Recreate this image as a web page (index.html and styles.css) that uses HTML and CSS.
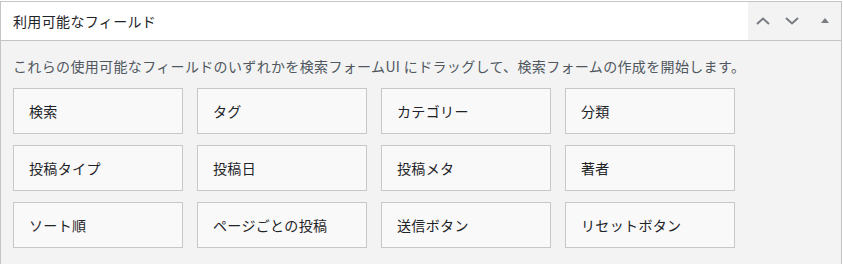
FILE: index.html
```html
<!DOCTYPE html>
<html>
<head>
  <title>利用可能なフィールド</title>
  <link rel="stylesheet" href="styles.css">
</head>
<body>
  <div class="postbox">
    <div class="postbox-header">
      <h2 class="hndle">利用可能なフィールド</h2>
      <div class="handle-actions">
        <button class="handle-btn" title="上へ移動">
          <svg width="14" height="8" viewBox="0 0 14 8"><path d="M1 7 L7 1.5 L13 7" fill="none" stroke="#787c82" stroke-width="2"/></svg>
        </button>
        <button class="handle-btn" title="下へ移動">
          <svg width="14" height="8" viewBox="0 0 14 8"><path d="M1 1 L7 6.5 L13 1" fill="none" stroke="#787c82" stroke-width="2"/></svg>
        </button>
        <button class="handle-btn toggle" title="パネルを切り替え">
          <svg width="8" height="5" viewBox="0 0 8 5"><path d="M0 5 L4 0 L8 5 Z" fill="#787c82"/></svg>
        </button>
      </div>
    </div>

    <div class="inside">
      <p class="description">これらの使用可能なフィールドのいずれかを検索フォームUI にドラッグして、検索フォームの作成を開始します。</p>

      <div class="field-list">
        <div class="field">検索</div>
        <div class="field">タグ</div>
        <div class="field">カテゴリー</div>
        <div class="field">分類</div>
        <div class="field">投稿タイプ</div>
        <div class="field">投稿日</div>
        <div class="field">投稿メタ</div>
        <div class="field">著者</div>
        <div class="field">ソート順</div>
        <div class="field">ページごとの投稿</div>
        <div class="field">送信ボタン</div>
        <div class="field">リセットボタン</div>
      </div>
    </div>
  </div>
</body>
</html>
```

FILE: styles.css
```css
/* Main Styles */
body {
  font-family: "Noto Sans CJK JP", "Noto Sans", sans-serif;
  margin: 0;
  padding: 1px 0 0;
  background-color: #fff;
  color: #1d2327;
  font-size: 14px;
  letter-spacing: 0.35px;
}

.postbox {
  width: 840px;
  height: 300px;
  border: 1px solid #c3c4c7;
  border-bottom: none;
  background-color: #f3f3f3;
}

/* Header Styles */
.postbox-header {
  display: flex;
  justify-content: space-between;
  align-items: center;
  height: 38px;
  background-color: #fff;
  border-bottom: 1px solid #c3c4c7;
}

.hndle {
  margin: 0;
  padding: 0 12px;
  font-size: 14px;
  font-weight: normal;
  line-height: 38px;
}

.handle-actions {
  display: flex;
  width: 93px;
  height: 100%;
  background-color: #f3f3f3;
}

.handle-btn {
  width: 29px;
  height: 38px;
  border: none;
  background: none;
  padding: 0;
  display: flex;
  align-items: center;
  justify-content: center;
  cursor: pointer;
}

.handle-btn.toggle {
  width: 35px;
  padding: 0 0 1px 2px;
}

/* Inside Styles */
.inside {
  padding: 0 12px;
}

.description {
  margin: 0;
  padding: 15px 0 0;
  height: 32px;
  line-height: 20px;
  color: #50575e;
  font-size: 14px;
}

.field-list {
  display: grid;
  grid-template-columns: repeat(4, 170px);
  column-gap: 14px;
  row-gap: 11px;
}

.field {
  height: 44px;
  line-height: 44px;
  padding: 0 15px;
  background-color: #f9f9f9;
  border: 1px solid #c8c8c8;
  color: #1d2327;
  cursor: move;
}
```
